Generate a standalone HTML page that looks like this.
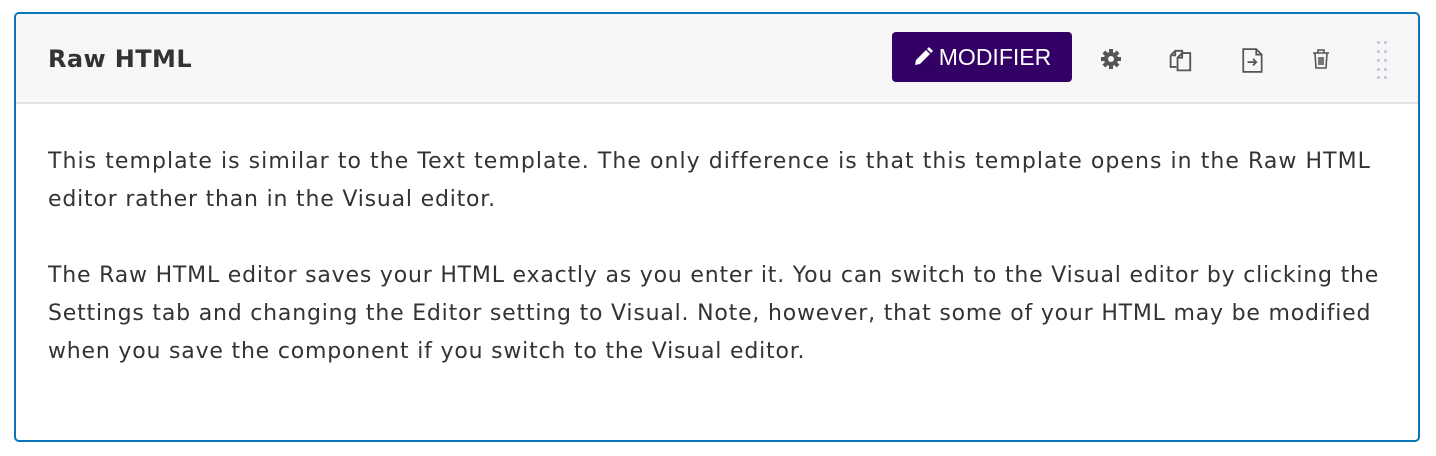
<!DOCTYPE html>
<html><head><style>
body{margin:0;background:#fff;font-family:"DejaVu Sans","Liberation Sans",sans-serif;}
.box{position:absolute;left:14px;top:12px;width:1402px;height:426px;border:2px solid #0a74b9;border-radius:5px;overflow:hidden;}
.hdr{height:88px;background:#f7f7f7;border-bottom:2px solid #e2e2e2;position:relative;}
.title{position:absolute;left:32px;top:31px;font-size:24px;font-weight:bold;color:#333;letter-spacing:0.4px;}
.btn{position:absolute;left:876px;top:18px;width:180px;height:50px;background:#330066;border-radius:4px;color:#fff;font-size:23px;line-height:50px;text-align:center;font-family:"Liberation Sans",sans-serif;}
.ic{position:absolute;top:34px;}
.body{padding:39px 32px;font-size:22px;line-height:38px;color:#333;white-space:nowrap;letter-spacing:1.05px;}
.body p{margin:0 0 38px 0;}
.a{letter-spacing:0.8px}
</style></head><body>
<div class="box">
<div class="hdr">
<div class="title">Raw HTML</div>
<div class="btn"><svg width="20" height="20" viewBox="0 0 20 20" style="vertical-align:-2px;margin-right:6px"><path d="M2 18l1-5 10-10 4 4-10 10z M14 2l2-2 4 4-2 2z" fill="#fff"/></svg>MODIFIER</div>
<svg class="ic" style="left:1084px" width="22" height="22" viewBox="0 0 22 22"><g fill="#555"><circle cx="11" cy="11" r="7"/><rect x="9" y="1" width="4" height="20"/><rect x="1" y="9" width="20" height="4"/><rect x="9" y="1" width="4" height="20" transform="rotate(45 11 11)"/><rect x="9" y="1" width="4" height="20" transform="rotate(-45 11 11)"/></g><circle cx="11" cy="11" r="3" fill="#f7f7f7"/></svg>
<svg class="ic" style="left:1150px;top:31px" width="30" height="30" viewBox="0 0 26 26" fill="none" stroke="#555" stroke-width="1.6"><path d="M4 9l4-4h6v4M4 9v10h5M4 9h4V5"/><path d="M10 11l4-4h7v15H10z M10 11h4V7"/></svg>
<svg class="ic" style="left:1224px;top:31px" width="26" height="30" viewBox="0 0 24 26" fill="none" stroke="#555" stroke-width="1.6"><path d="M3 3h12l5 5v16H3z M15 3v5h5"/><path d="M7 15h8M12 12l3 3-3 3"/></svg>
<svg class="ic" style="left:1294px;top:32px" width="22" height="26" viewBox="0 0 22 24" fill="none" stroke="#555" stroke-width="1.6"><path d="M3 6h16M8 6V3h6v3M5 6l1 15h10l1-15M9 10v8M11 10v8M13 10v8"/></svg>
<svg class="ic" style="left:1360px;top:26px" width="12" height="40"><g fill="#ccd"><rect x="1" y="1" width="3" height="3"/><rect x="8" y="1" width="3" height="3"/><rect x="1" y="10" width="3" height="3"/><rect x="8" y="10" width="3" height="3"/><rect x="1" y="19" width="3" height="3"/><rect x="8" y="19" width="3" height="3"/><rect x="1" y="28" width="3" height="3"/><rect x="8" y="28" width="3" height="3"/><rect x="1" y="36" width="3" height="3"/><rect x="8" y="36" width="3" height="3"/></g></svg>
</div>
<div class="body">
<p>This template is similar to the Text template. The only difference is that this template opens in the Raw HTML<br><span class="a">editor rather than in the Visual editor.</span></p>
<p><span class="a">The Raw HTML editor saves your HTML exactly as you enter it. You can switch to the Visual editor by clicking the</span><br><span class="a">Settings tab and changing the Editor setting to Visual. Note, however, that some of your HTML may be modified</span><br><span class="a">when you save the component if you switch to the Visual editor.</span></p>
</div>
</div>
</body></html>
